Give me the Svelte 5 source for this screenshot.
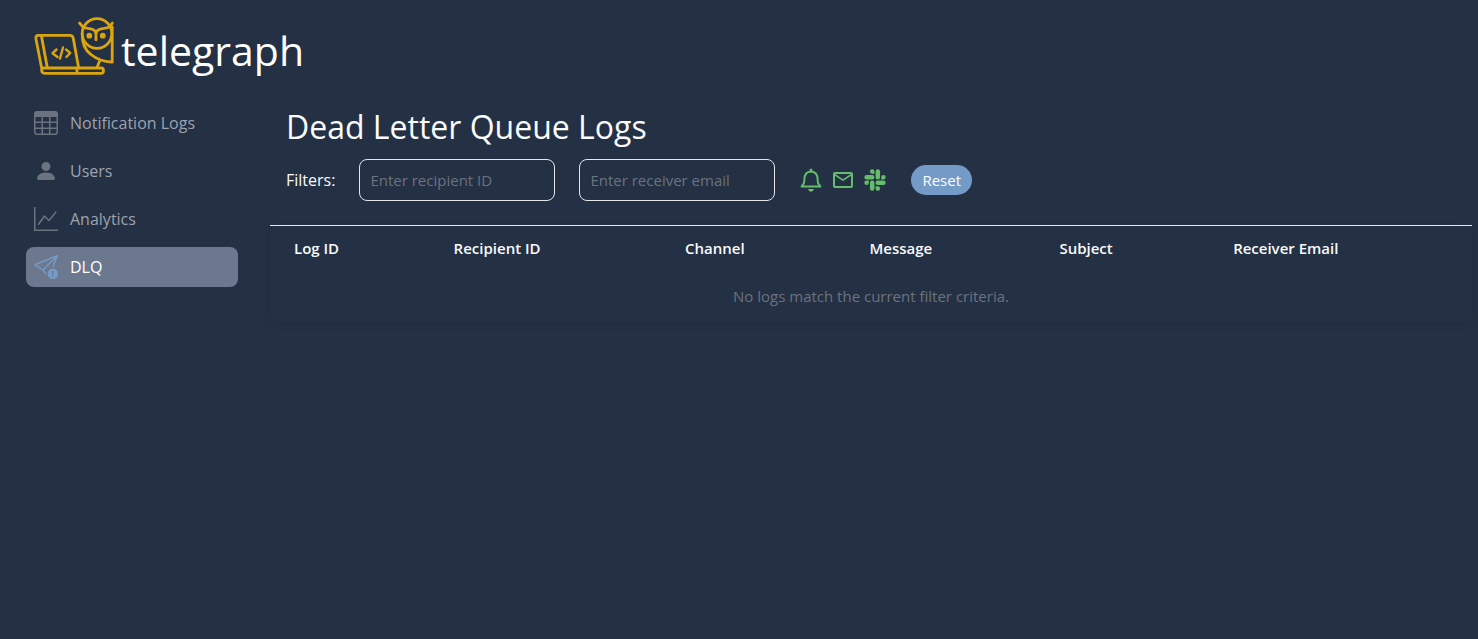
<script>
  let recipient = $state('');
  let email = $state('');
  let active = $state('DLQ');

  const links = ['Notification Logs', 'Users', 'Analytics', 'DLQ'];
  const columns = ['Log ID', 'Recipient ID', 'Channel', 'Message', 'Subject', 'Receiver Email'];

  function reset() {
    recipient = '';
    email = '';
  }
</script>

<div class="page">
  <header>
    <a class="brand" href="#home">
      <svg width="80" height="60" viewBox="1 2 80 60" fill="none" stroke="#dba511" stroke-width="2.8" stroke-linecap="round" stroke-linejoin="round" aria-hidden="true">
        <path d="M7.5 51.5 L1.9 22.5 Q1.5 19.4 4.3 19.4 H36 Q38.6 19.4 39.2 22 L44.6 51.5" />
        <path d="M7.6 21 L13.2 51" />
        <path d="M43 52 H10 Q7.2 52 7.6 54.6 Q8 57.4 11.5 57.4 H67 Q69.5 57.4 69.5 54.7 Q69.5 52 67 52 H43 V57" />
        <path d="M22.5 33.5 L18.5 37.2 L23.5 41 M32 33.5 L36.2 37 L32.4 41 M29 31.5 L26 42.5" stroke-width="2.4" />
        <circle cx="63" cy="17.5" r="14.8" />
        <path d="M45.5 7 L48.6 10.6 Q50.6 12 54 12.4 Q61.8 13 62 17.5 Q62.2 13 70 12.4 Q73.6 12 75.6 10.6 L78.4 7" />
        <circle cx="55.3" cy="19.7" r="1.5" fill="#dba511" />
        <circle cx="68.8" cy="19.7" r="1.5" fill="#dba511" />
        <path d="M62 17 V23.8" />
        <path d="M48.2 18 Q48 32 57 38.5 Q65 45.3 78.2 46.2 V11" />
        <path d="M66 44 L63 51.5" />
      </svg>
      <span>telegraph</span>
    </a>
  </header>

  <div class="body">
    <nav>
      {#each links as name}
        <a href="#{name}" class:active={active === name} onclick={() => (active = name)}>
          {#if name === 'Notification Logs'}
            <svg width="24" height="24" viewBox="0 0 16 16" fill="currentColor" aria-hidden="true">
              <path d="M0 2a2 2 0 0 1 2-2h12a2 2 0 0 1 2 2v12a2 2 0 0 1-2 2H2a2 2 0 0 1-2-2zm15 2h-4v3h4zm0 4h-4v3h4zm0 4h-4v3h3a1 1 0 0 0 1-1zm-5 3v-3H6v3zm-5 0v-3H1v2a1 1 0 0 0 1 1zm-4-4h4V8H1zm0-4h4V4H1zm5-3v3h4V4zm4 4H6v3h4z" />
            </svg>
          {:else if name === 'Users'}
            <svg width="24" height="24" viewBox="0 0 16 16" fill="currentColor" aria-hidden="true">
              <path d="M3 14s-1 0-1-1 1-4 6-4 6 3 6 4-1 1-1 1zm5-6a3 3 0 1 0 0-6 3 3 0 0 0 0 6" />
            </svg>
          {:else if name === 'Analytics'}
            <svg width="24" height="24" viewBox="0 0 16 16" fill="currentColor" aria-hidden="true">
              <path fill-rule="evenodd" d="M0 0h1v15h15v1H0zm14.817 3.113a.5.5 0 0 1 .07.704l-4.5 5.5a.5.5 0 0 1-.74.037L7.06 6.767l-3.656 5.027a.5.5 0 0 1-.808-.588l4-5.5a.5.5 0 0 1 .758-.06l2.609 2.61 4.15-5.073a.5.5 0 0 1 .704-.07" />
            </svg>
          {:else}
            <svg class="blue" width="24" height="24" viewBox="0 0 16 16" fill="currentColor" aria-hidden="true">
              <path d="M15.964.686a.5.5 0 0 0-.65-.65L.767 5.855a.75.75 0 0 0-.124 1.329l4.995 3.178 1.531 2.406a.5.5 0 0 0 .844-.536L6.637 10.07l7.494-7.494-1.895 4.738a.5.5 0 1 0 .928.372zm-2.54 1.183L5.93 9.363 1.591 6.602z" />
              <path d="M12.5 16a3.5 3.5 0 1 0 0-7 3.5 3.5 0 0 0 0 7m.5-5v1.5a.5.5 0 0 1-1 0V11a.5.5 0 0 1 1 0m0 3a.5.5 0 1 1-1 0 .5.5 0 0 1 1 0" />
            </svg>
          {/if}
          <span>{name}</span>
        </a>
      {/each}
    </nav>

    <main>
      <h1>Dead Letter Queue Logs</h1>
      <div class="filters">
        <span class="label">Filters:</span>
        <input type="text" aria-label="Recipient ID" placeholder="Enter recipient ID" bind:value={recipient} />
        <input type="text" aria-label="Receiver email" placeholder="Enter receiver email" bind:value={email} />
        <div class="channels">
          <button class="icon" aria-label="Push">
            <svg width="24" height="24" viewBox="0 0 24 24" fill="none" stroke="currentColor" stroke-width="2" stroke-linejoin="round" aria-hidden="true">
              <path d="M2.6 18.6 Q5.4 16 5.4 12.5 V10 Q5.8 4.2 12 3.4 Q18.2 4.2 18.6 10 V12.5 Q18.6 16 21.4 18.6 Z" />
              <path d="M12 3.2 V0.8" stroke-width="2.6" />
              <path d="M9 21 H15 Q14.2 23.8 12 23.8 Q9.8 23.8 9 21 Z" fill="currentColor" stroke="none" />
            </svg>
          </button>
          <button class="icon" aria-label="Email">
            <svg width="24" height="24" viewBox="0 0 24 24" fill="none" stroke="currentColor" stroke-width="2" stroke-linejoin="round" aria-hidden="true">
              <rect x="3" y="5" width="18" height="14" rx="1" />
              <path d="M3.5 6.5 L12 12.2 L20.5 6.5" stroke-width="1.6" />
            </svg>
          </button>
          <button class="icon" aria-label="Slack">
            <svg width="24" height="24" viewBox="-1.5 -1.5 27 27" fill="currentColor" aria-hidden="true">
              {#each [0, 90, 180, 270] as angle}
                <g transform="rotate({angle} 12 12)">
                  <path d="M8.834 5.042a2.521 2.521 0 1 1 2.521-2.52v2.52z" />
                  <path d="M8.834 6.313a2.521 2.521 0 0 1 0 5.042H2.522a2.521 2.521 0 0 1 0-5.042z" />
                </g>
              {/each}
            </svg>
          </button>
        </div>
        <button class="reset" onclick={reset}>Reset</button>
      </div>

      <table>
        <thead>
          <tr>
            {#each columns as column}
              <th scope="col">{column}</th>
            {/each}
          </tr>
        </thead>
        <tbody>
          <tr>
            <td colspan={columns.length}>No logs match the current filter criteria.</td>
          </tr>
        </tbody>
      </table>
    </main>
  </div>
</div>

<style>
  :global(body) {
    margin: 0;
    background: #243043;
  }

  .page {
    box-sizing: border-box;
    min-height: 100vh;
    padding: 16px 6px 16px 26px;
    color: #f9fafb;
    font: 16px/24px 'Open Sans', sans-serif;
  }

  .brand {
    display: flex;
    align-items: center;
    width: max-content;
    gap: 6px;
    padding-left: 9px;
    color: #fff;
    font-size: 41px;
    line-height: 60px;
    text-decoration: none;
  }

  .brand svg {
    overflow: visible;
  }

  .brand span {
    padding-top: 4px;
  }

  .body {
    display: flex;
    gap: 32px;
    padding-top: 20px;
  }

  nav {
    display: flex;
    flex: 0 0 212px;
    flex-direction: column;
    gap: 8px;
    padding-top: 3px;
  }

  nav a {
    display: flex;
    align-items: center;
    gap: 12px;
    padding: 8px;
    border-radius: 8px;
    color: #9ca3af;
    text-decoration: none;
  }

  nav svg {
    color: #6b7280;
  }

  nav a.active {
    background: #6b788e;
    color: #fff;
  }

  nav svg.blue {
    color: #749ac8;
  }

  main {
    flex: 1;
    min-width: 0;
  }

  h1 {
    margin: 0;
    padding: 3px 16px 0;
    font-size: 32px;
    font-weight: 400;
    line-height: 48px;
  }

  .filters {
    display: flex;
    align-items: center;
    gap: 24px;
    padding: 8px 16px 24px;
  }

  input {
    box-sizing: border-box;
    width: 196px;
    height: 42px;
    padding: 0 10px;
    border: 1px solid #e5e7eb;
    border-radius: 8px;
    background: transparent;
    color: #f9fafb;
    font: 15px/22px 'Open Sans', sans-serif;
  }

  input::placeholder {
    color: #6b7280;
    opacity: 1;
  }

  .channels {
    display: flex;
    gap: 8px;
  }

  button {
    border: 0;
    cursor: pointer;
  }

  .icon {
    display: flex;
    padding: 0;
    background: none;
    color: #64bd6b;
  }

  .reset {
    padding: 4px 11px;
    border-radius: 16px;
    background: #749ac8;
    color: #fff;
    font: 15px/22px 'Open Sans', sans-serif;
  }

  table {
    width: 100%;
    border-collapse: collapse;
    border-top: 1px solid #e5e7eb;
    border-radius: 8px;
    box-shadow: 0 2px 6px rgb(34 45 60 / 0.6);
    font-size: 15px;
  }

  th {
    padding: 11px 24px 13px;
    font-weight: 600;
    text-align: left;
    line-height: 22px;
  }

  td {
    padding: 12px 24px 14px;
    color: #6b7280;
    text-align: center;
  }
</style>
